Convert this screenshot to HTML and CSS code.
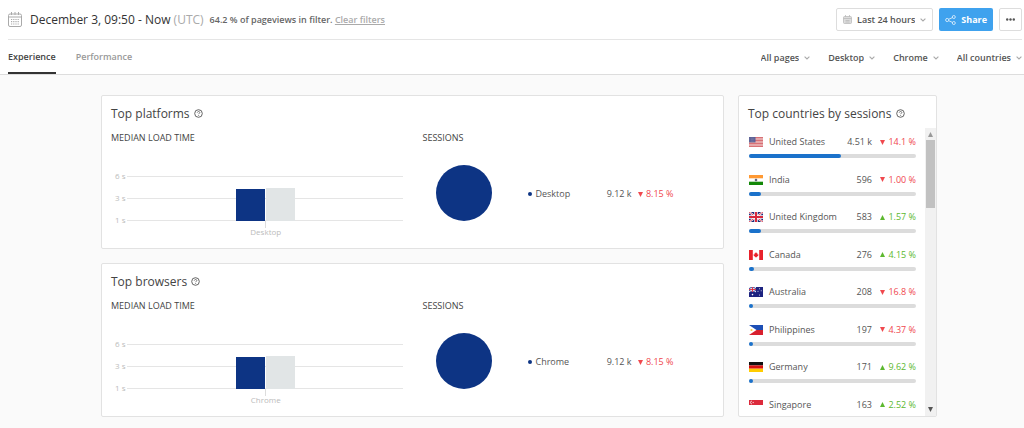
FILE: index.html
```html
<!DOCTYPE html>
<html lang="en">
	<head>
		<meta charset="utf-8">
		<title>Experience</title>
		<link rel="stylesheet" href="styles.css">
	</head>
	<body>
		<svg class="sprite" aria-hidden="true">
			<symbol id="chevron" viewBox="0 0 6 4"><path d="M.6.6 3 3 5.400.6" fill="none" stroke="#aaa" stroke-width="1.100"/></symbol>
			<symbol id="help" viewBox="0 0 9 9">
				<circle cx="4.500" cy="4.500" r="3.800" fill="none" stroke="#555" stroke-width=".9"/>
				<path d="M3.300 3.700c0-1.600 2.500-1.600 2.500-.1 0 .8-1.200.8-1.200 1.600M4.600 6v.8" fill="none" stroke="#555" stroke-width=".8"/>
			</symbol>
			<symbol id="down" viewBox="0 0 5 5"><path d="M0 0h5L2.500 5z" fill="currentColor"/></symbol>
			<symbol id="up" viewBox="0 0 5 5"><path d="M0 5h5L2.500 0z" fill="currentColor"/></symbol>
		</svg>
		<header class="header">
			<div class="topbar">
				<svg class="calendar" viewBox="0 0 14 15" fill="none" stroke="#aaa">
					<rect x=".5" y="2" width="13" height="12.500" rx="1.500"/>
					<path d="M.5 5h13M3.500 0v3M7 0v3M10.500 0v3"/>
					<path d="M3 7.500h8M3 9.700h8M3 12h8" stroke-width="1.200" stroke-dasharray="1.200 1"/>
				</svg>
				<h1 class="period">December 3, 09:50 - Now <span class="zone">(UTC)</span></h1>
				<p class="filter-info">64.2 % of pageviews in filter. <a class="clear" href="#">Clear filters</a></p>
				<div class="actions">
					<label class="picker range">
						<svg class="range-icon" viewBox="0 0 9 9" fill="#ddd" stroke="#bbb" stroke-width=".8">
							<rect x=".5" y="1.500" width="8" height="7" rx="1"/>
							<path d="M.5 3.500h8M2.500 0v2M6.500 0v2M2.500 5.500h4M2.500 7h4"/>
						</svg>
						<select class="picker-select" aria-label="Time range"><option>Last 24 hours</option></select>
						<svg class="chevron"><use href="#chevron"/></svg>
					</label>
					<button class="share" type="button">
						<svg class="share-icon" viewBox="0 0 11 10" fill="none" stroke="#fff" stroke-width=".9" opacity=".8">
							<circle cx="2.200" cy="5" r="1.600"/>
							<circle cx="8.800" cy="2" r="1.500"/>
							<circle cx="8.800" cy="8" r="1.500"/>
							<path d="M3.700 4.300 7.400 2.600M3.700 5.700 7.400 7.400"/>
						</svg>
						Share
					</button>
					<button class="more" type="button" aria-label="More">
						<svg class="dots" viewBox="0 0 9 3" fill="#555"><circle cx="1.200" cy="1.500" r="1.200"/><circle cx="4.500" cy="1.500" r="1.200"/><circle cx="7.800" cy="1.500" r="1.200"/></svg>
					</button>
				</div>
			</div>
			<div class="subbar">
				<nav class="tabs">
					<a class="tab active" href="#">Experience</a>
					<a class="tab" href="#">Performance</a>
				</nav>
				<div class="filters">
					<label class="picker">
						<select class="picker-select" aria-label="Pages"><option>All pages</option></select>
						<svg class="chevron"><use href="#chevron"/></svg>
					</label>
					<label class="picker">
						<select class="picker-select" aria-label="Platform"><option>Desktop</option></select>
						<svg class="chevron"><use href="#chevron"/></svg>
					</label>
					<label class="picker">
						<select class="picker-select" aria-label="Browser"><option>Chrome</option></select>
						<svg class="chevron"><use href="#chevron"/></svg>
					</label>
					<label class="picker">
						<select class="picker-select" aria-label="Country"><option>All countries</option></select>
						<svg class="chevron"><use href="#chevron"/></svg>
					</label>
				</div>
			</div>
		</header>
		<main class="board">
			<section class="card">
				<h2 class="title">Top platforms <svg class="help"><use href="#help"/></svg></h2>
				<div class="columns">
					<div>
						<h3 class="subtitle">MEDIAN LOAD TIME</h3>
						<div class="chart">
							<div class="scale">6 s</div>
							<div class="scale">3 s</div>
							<div class="scale">1 s</div>
							<div class="bars">
								<div class="bar current"></div>
								<div class="bar previous"></div>
							</div>
							<div class="axis">Desktop</div>
						</div>
					</div>
					<div>
						<h3 class="subtitle">SESSIONS</h3>
						<div class="sessions">
							<div class="pie"></div>
							<div class="legend">
								<span class="bullet"></span>
								<span class="name">Desktop</span>
								<span class="count">9.12 k</span>
								<span class="change bad"><svg class="arrow"><use href="#down"/></svg>8.15 %</span>
							</div>
						</div>
					</div>
				</div>
			</section>
			<section class="card">
				<h2 class="title">Top browsers <svg class="help"><use href="#help"/></svg></h2>
				<div class="columns">
					<div>
						<h3 class="subtitle">MEDIAN LOAD TIME</h3>
						<div class="chart">
							<div class="scale">6 s</div>
							<div class="scale">3 s</div>
							<div class="scale">1 s</div>
							<div class="bars">
								<div class="bar current"></div>
								<div class="bar previous"></div>
							</div>
							<div class="axis">Chrome</div>
						</div>
					</div>
					<div>
						<h3 class="subtitle">SESSIONS</h3>
						<div class="sessions">
							<div class="pie"></div>
							<div class="legend">
								<span class="bullet"></span>
								<span class="name">Chrome</span>
								<span class="count">9.12 k</span>
								<span class="change bad"><svg class="arrow"><use href="#down"/></svg>8.15 %</span>
							</div>
						</div>
					</div>
				</div>
			</section>
			<section class="card countries">
				<h2 class="title">Top countries by sessions <svg class="help"><use href="#help"/></svg></h2>
				<div class="scroller">
					<ul class="list">
						<li class="country">
							<svg class="flag" viewBox="0 0 14 10"><path fill="#f5dede" d="M0 0h14v10H0z"/><path stroke="#d0555c" stroke-width=".8" d="M0 .5h14M0 2h14M0 3.500h14M0 5h14M0 6.500h14M0 8h14M0 9.500h14"/><path fill="#5a5f94" d="M0 0h6.500v5.400H0z"/><path stroke="#b9bbd5" stroke-width=".5" stroke-dasharray=".5 .8" d="M.7 1.200h5.300M.7 2.700h5.300M.7 4.200h5.300"/></svg>
							<span class="name">United States</span>
							<span class="count">4.51 k</span>
							<span class="change bad"><svg class="arrow"><use href="#down"/></svg>14.1 %</span>
							<div class="meter"><div class="fill" style="width: 55%"></div></div>
						</li>
						<li class="country">
							<svg class="flag" viewBox="0 0 14 10"><path fill="#fff" d="M0 0h14v10H0z"/><path fill="#f93" d="M0 0h14v3.300H0z"/><path fill="#138808" d="M0 6.700h14V10H0z"/><circle cx="7" cy="5" r="1.200" fill="#556" stroke="#99b" stroke-width=".3"/></svg>
							<span class="name">India</span>
							<span class="count">596</span>
							<span class="change bad"><svg class="arrow"><use href="#down"/></svg>1.00 %</span>
							<div class="meter"><div class="fill" style="width: 7%"></div></div>
						</li>
						<li class="country">
							<svg class="flag" viewBox="0 0 14 10"><path fill="#1f2a78" d="M0 0h14v10H0z"/><path stroke="#fff" stroke-width="2" d="m0 0 14 10M14 0 0 10"/><path stroke="#d8283c" stroke-width=".8" d="m0 0 14 10M14 0 0 10"/><path stroke="#fff" stroke-width="3.400" d="M7 0v10M0 5h14"/><path stroke="#d8283c" stroke-width="2" d="M7 0v10M0 5h14"/></svg>
							<span class="name">United Kingdom</span>
							<span class="count">583</span>
							<span class="change good"><svg class="arrow"><use href="#up"/></svg>1.57 %</span>
							<div class="meter"><div class="fill" style="width: 7%"></div></div>
						</li>
						<li class="country">
							<svg class="flag" viewBox="0 0 14 10"><path fill="#fff" d="M0 0h14v10H0z"/><path fill="#e8212b" d="M0 0h3.800v10H0zM10.200 0H14v10h-3.800zM7 2l.7 1.300.7-.3-.2 1.600 1.200-.5-.3 1.100.5.4-2 1.400H7.200V8h-.4V7h-.4l-2-1.400.5-.4-.3-1.100 1.200.5L5.600 3l.7.3z"/></svg>
							<span class="name">Canada</span>
							<span class="count">276</span>
							<span class="change good"><svg class="arrow"><use href="#up"/></svg>4.15 %</span>
							<div class="meter"><div class="fill" style="width: 3%"></div></div>
						</li>
						<li class="country">
							<svg class="flag" viewBox="0 0 14 10"><path fill="#1d2380" d="M0 0h14v10H0z"/><path stroke="#fff" stroke-width="1" d="m0 0 7 5M7 0 0 5"/><path stroke="#fff" stroke-width="1.600" d="M3.500 0v5M0 2.500h7"/><path stroke="#d8283c" stroke-width=".9" d="M3.500 0v5M0 2.500h7"/><g fill="#fff"><circle cx="3.500" cy="7.600" r=".8"/><circle cx="10.500" cy="1.700" r=".5"/><circle cx="9" cy="4.200" r=".5"/><circle cx="12.200" cy="3.700" r=".5"/><circle cx="10.500" cy="8" r=".5"/></g></svg>
							<span class="name">Australia</span>
							<span class="count">208</span>
							<span class="change bad"><svg class="arrow"><use href="#down"/></svg>16.8 %</span>
							<div class="meter"><div class="fill" style="width: 2%"></div></div>
						</li>
						<li class="country">
							<svg class="flag" viewBox="0 0 14 10"><path fill="#1d4fb5" d="M0 0h14v5H0z"/><path fill="#d8202e" d="M0 5h14v5H0z"/><path fill="#fff" d="m0 0 7.500 5L0 10z"/><circle cx="2.500" cy="5" r="1.100" fill="#f5cc4a"/></svg>
							<span class="name">Philippines</span>
							<span class="count">197</span>
							<span class="change bad"><svg class="arrow"><use href="#down"/></svg>4.37 %</span>
							<div class="meter"><div class="fill" style="width: 2%"></div></div>
						</li>
						<li class="country">
							<svg class="flag" viewBox="0 0 14 10"><path fill="#111" d="M0 0h14v3.400H0z"/><path fill="#d81010" d="M0 3.400h14v3.300H0z"/><path fill="#fc0" d="M0 6.700h14V10H0z"/></svg>
							<span class="name">Germany</span>
							<span class="count">171</span>
							<span class="change good"><svg class="arrow"><use href="#up"/></svg>9.62 %</span>
							<div class="meter"><div class="fill" style="width: 2%"></div></div>
						</li>
						<li class="country">
							<svg class="flag" viewBox="0 0 14 10"><path fill="#fff" d="M0 0h14v10H0z"/><path fill="#dc2a3c" d="M0 0h14v5H0z"/><path fill="none" stroke="#fff" stroke-width=".7" d="M3 1a1.500 1.500 0 0 0 0 3"/><circle cx="4.200" cy="2.500" r=".7" fill="#f6c6cb"/></svg>
							<span class="name">Singapore</span>
							<span class="count">163</span>
							<span class="change good"><svg class="arrow"><use href="#up"/></svg>2.52 %</span>
							<div class="meter"><div class="fill" style="width: 2%"></div></div>
						</li>
					</ul>
					<div class="scrollbar">
						<svg class="arrow muted"><use href="#up"/></svg>
						<div class="thumb"></div>
						<svg class="arrow"><use href="#down"/></svg>
					</div>
				</div>
			</section>
		</main>
	</body>
</html>
```
FILE: styles.css
```css
* {
	box-sizing: border-box;
}

body {
	margin: 0;
	background: #fafafa;
	color: #555;
	font: 9px/12px "Open Sans", "Noto Sans", sans-serif;
}

h1, h2, h3, p, ul {
	margin: 0;
	padding: 0;
}

a {
	color: inherit;
	text-decoration: none;
}

.sprite {
	display: block;
	width: 0;
	height: 0;
}

/* header */

.header {
	background: #fff;
	border-bottom: 1px solid #ddd;
	padding: 0 2px 0 8px;
}

.topbar {
	display: flex;
	align-items: center;
	height: 40px;
	border-bottom: 1px solid #e5e5e5;
}

.calendar {
	width: 14px;
	height: 15px;
	margin-right: 8px;
}

.period {
	font-size: 12px;
	font-weight: 500;
	line-height: 16px;
	color: #333;
}

.zone {
	color: #aaa;
	font-weight: 400;
}

.filter-info {
	margin-left: 6px;
	font-weight: 600;
	color: #666;
}

.clear {
	color: #aaa;
	text-decoration: underline;
}

.actions {
	display: flex;
	gap: 6px;
	margin-left: auto;
}

.picker {
	display: flex;
	align-items: center;
}

.picker-select {
	appearance: none;
	field-sizing: content;
	border: 0;
	padding: 0;
	background: none;
	color: #555;
	font: inherit;
	font-weight: 600;
}

.chevron {
	width: 6px;
	height: 4px;
	margin-left: 5px;
}

.range {
	height: 23px;
	padding: 0 6px;
	border: 1px solid #ddd;
	border-radius: 2px;
}

.range-icon {
	width: 9px;
	height: 9px;
	margin-right: 5px;
}

.share, .more {
	display: flex;
	align-items: center;
	justify-content: center;
	height: 23px;
	border-radius: 2px;
	font: inherit;
}

.share {
	gap: 5px;
	padding: 0 6px;
	border: 0;
	background: #3fa2ee;
	color: #fff;
	font-weight: 700;
}

.share-icon {
	width: 11px;
	height: 10px;
}

.more {
	width: 23px;
	padding: 0;
	border: 1px solid #ddd;
	background: #fff;
}

.dots {
	width: 9px;
	height: 3px;
}

.subbar {
	display: flex;
	justify-content: space-between;
	height: 34px;
}

.tabs {
	display: flex;
	gap: 20px;
}

.tab {
	padding-top: 11px;
	font-weight: 600;
	color: #999;
}

.tab.active {
	color: #444;
	border-bottom: 2px solid #333;
}

.filters {
	display: flex;
	gap: 18px;
	padding-top: 2px;
}

/* cards */

.board {
	display: grid;
	grid-template-columns: 1fr 199px;
	gap: 14px;
	max-width: 850px;
	margin: 0 auto;
	padding: 20px 0 10px 14px;
}

.card {
	grid-column: 1;
	padding: 10px 9px;
	background: #fff;
	border: 1px solid #e2e2e2;
	border-radius: 2px;
}

.title {
	font-size: 12px;
	font-weight: 500;
	line-height: 16px;
	color: #444;
}

.help {
	width: 9px;
	height: 9px;
	margin-left: 1px;
}

.columns {
	display: grid;
	grid-template-columns: 1fr 1fr;
	gap: 20px;
	padding-top: 10px;
}

.subtitle {
	font-size: 9px;
	font-weight: 500;
	color: #444;
}

.chart {
	position: relative;
	padding-top: 26px;
	color: #bbb;
	font-size: 8px;
}

.scale {
	display: flex;
	align-items: center;
	gap: 2px;
	height: 12px;
	margin-bottom: 10px;
	padding-left: 4px;
}

.scale::after {
	content: "";
	flex: 1;
	height: 1px;
	background: #e5e5e5;
}

.bars {
	position: absolute;
	bottom: 17px;
	left: 18px;
	right: 0;
	display: flex;
	align-items: flex-end;
	justify-content: center;
	gap: 1px;
}

.bar {
	width: 29px;
}

.current {
	height: 32px;
	background: #0d3484;
}

.previous {
	height: 33px;
	background: #e1e5e6;
}

.axis {
	margin: -16px 0 0 18px;
	padding-top: 6px;
	text-align: center;
	background: linear-gradient(#ddd, #ddd) center top / 1px 8px no-repeat;
}

.sessions {
	display: flex;
	align-items: center;
	padding: 21px 0 0 13px;
}

.pie {
	width: 56px;
	height: 56px;
	border-radius: 50%;
	background: #0d3484;
}

.legend {
	display: flex;
	flex: 1;
	align-items: center;
	max-width: 182px;
	padding: 2px 0 0 36px;
}

.bullet {
	width: 4px;
	height: 4px;
	margin-right: 4px;
	border-radius: 50%;
	background: #0d3484;
}

.name {
	flex: 1;
}

.change {
	display: flex;
	align-items: center;
	justify-content: space-between;
	width: 36px;
	margin-left: 8px;
}

.legend .change {
	margin-left: 6px;
}

.bad {
	color: #f0484e;
}

.good {
	color: #5db82f;
}

.arrow {
	width: 5px;
	height: 5px;
}

/* countries */

.countries {
	grid-column: 2;
	grid-row: 1 / 3;
	padding: 10px 0 0;
}

.countries .title {
	padding-left: 9px;
}

.scroller {
	display: flex;
	height: 288px;
	margin-top: 6px;
	overflow: hidden;
}

.list {
	display: grid;
	grid-auto-rows: 1fr;
	flex: 1;
	height: 300px;
	padding: 0 9px 0 10px;
	list-style: none;
}

.country {
	display: flex;
	flex-wrap: wrap;
	align-items: center;
	align-content: flex-start;
	padding-top: 8px;
}

.flag {
	width: 14px;
	height: 10px;
	margin-right: 6px;
}

.meter {
	width: 100%;
	height: 4px;
	margin-top: 6px;
	border-radius: 2px;
	background: #dcdcdc;
}

.fill {
	min-width: 4px;
	height: 4px;
	border-radius: 2px;
	background: #1b72cb;
}

.scrollbar {
	display: flex;
	flex-direction: column;
	align-items: center;
	width: 11px;
	padding: 4px 1px;
	background: #f1f1f1;
}

.thumb {
	width: 100%;
	height: 68px;
	margin: 3px 0 auto;
	background: #c1c1c1;
}

.muted {
	color: #999;
}
```
